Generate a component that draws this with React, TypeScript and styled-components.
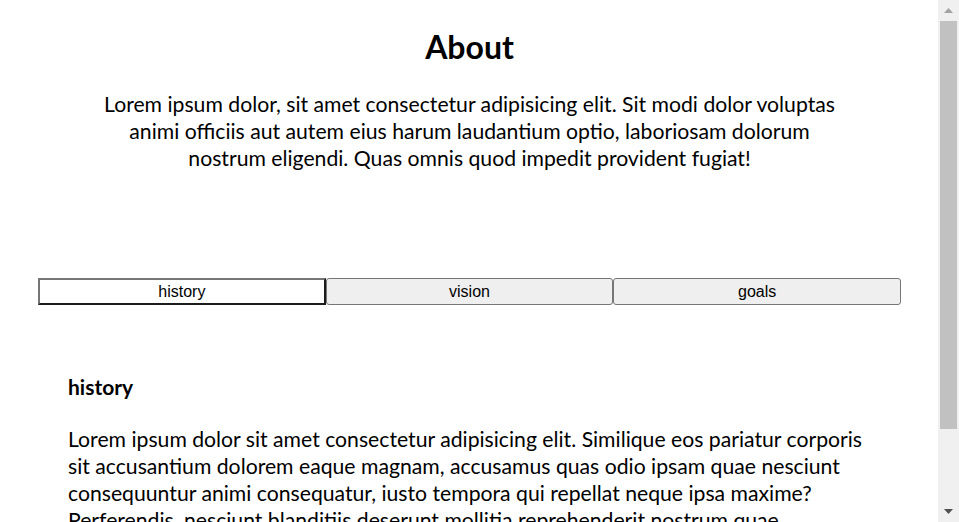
import React, { useState } from "react";
import styled, { createGlobalStyle } from "styled-components";

const GlobalStyle = createGlobalStyle`
  html, body { height: 100%; overflow: hidden; }
  body {
    margin: 0;
    background: #ffffff;
    color: #000000;
    font-family: Lato, "Noto Sans CJK KR", sans-serif;
  }
`;

const Frame = styled.div`
  display: flex;
  height: 100vh;
  overflow: hidden;
`;

const Viewport = styled.div`
  flex: 1;
  min-width: 0;
  overflow-y: auto;
  scrollbar-width: none;
`;

const Rail = styled.div`
  flex: none;
  width: 21px;
  display: flex;
  flex-direction: column;
  background: #f0f0f0;
`;

const RailButton = styled.div`
  flex: none;
  height: 21px;
  display: flex;
  align-items: center;
  justify-content: center;
`;

const RailTrack = styled.div`
  flex: 1;
  padding: 0 2px;
`;

const Thumb = styled.div`
  height: 408px;
  background: #c1c1c1;
`;

const Page = styled.main`
  padding: 0 37px 60px 38px;
`;

const Intro = styled.header`
  display: flex;
  flex-direction: column;
  align-items: center;
  padding-top: 23px;
`;

const Title = styled.h1`
  margin: 0;
  font-size: 32px;
  line-height: 48px;
  font-weight: 700;
`;

const Lead = styled.p`
  margin: 20px 0 0;
  max-width: 745px;
  text-align: center;
  font-size: 21.2px;
  line-height: 27px;
`;

const TabBar = styled.nav`
  display: grid;
  grid-template-columns: repeat(3, 1fr);
  margin-top: 106px;
`;

const Tab = styled.button<{ $active: boolean }>`
  min-width: 0;
  box-sizing: border-box;
  height: 27px;
  padding: 0 6px;
  font-family: "Liberation Sans", Arial, sans-serif;
  font-size: 16px;
  color: #000;
  cursor: pointer;
  background: ${(p) => (p.$active ? "#ffffff" : "#efefef")};
  border-style: solid;
  border-width: ${(p) => (p.$active ? "2px" : "1px")};
  border-color: ${(p) =>
    p.$active ? "#767676 #1c1c1c #1c1c1c #767676" : "#767676"};
  border-radius: ${(p) => (p.$active ? "0" : "3px")};
`;

const Panel = styled.section`
  padding: 68px 30px 0;
`;

const PanelTitle = styled.h3`
  margin: 0;
  font-size: 21px;
  line-height: 27px;
  font-weight: 700;
`;

const PanelText = styled.p`
  margin: 26px 0 0;
  font-size: 21.2px;
  line-height: 27px;
`;

const tabs = ["history", "vision", "goals"] as const;
type TabKey = (typeof tabs)[number];

const content: Record<TabKey, string> = {
  history:
    "Lorem ipsum dolor sit amet consectetur adipisicing elit. Similique eos pariatur corporis sit accusantium dolorem eaque magnam, accusamus quas odio ipsam quae nesciunt consequuntur animi consequatur, iusto tempora qui repellat neque ipsa maxime? Perferendis, nesciunt blanditiis deserunt mollitia reprehenderit nostrum quae.",
  vision:
    "Lorem ipsum dolor sit amet consectetur adipisicing elit. Quibusdam voluptatum, odit eius ratione nemo quae dolorum a aspernatur consequuntur fugiat incidunt cumque, tempora rem doloremque.",
  goals:
    "Lorem ipsum dolor sit amet consectetur adipisicing elit. Eligendi vel sint reiciendis, repellendus, dicta voluptas ullam doloribus quam impedit laborum quos ipsum nobis.",
};

export default function App() {
  const [active, setActive] = useState<TabKey>("history");
  return (
    <>
      <GlobalStyle />
      <Frame>
        <Viewport>
          <Page>
            <Intro>
              <Title>About</Title>
              <Lead>
                Lorem ipsum dolor, sit amet consectetur adipisicing elit. Sit
                modi dolor voluptas animi officiis aut autem eius harum
                laudantium optio, laboriosam dolorum nostrum eligendi. Quas
                omnis quod impedit provident fugiat!
              </Lead>
            </Intro>
            <TabBar>
              {tabs.map((t) => (
                <Tab
                  key={t}
                  $active={t === active}
                  onClick={() => setActive(t)}
                >
                  {t}
                </Tab>
              ))}
            </TabBar>
            <Panel>
              <PanelTitle>{active}</PanelTitle>
              <PanelText>{content[active]}</PanelText>
            </Panel>
          </Page>
        </Viewport>
        <Rail aria-hidden="true">
          <RailButton>
            <svg width="9" height="5" viewBox="0 0 9 5">
              <path d="M0 5L4.5 0L9 5z" fill="#a3a3a3" />
            </svg>
          </RailButton>
          <RailTrack>
            <Thumb />
          </RailTrack>
          <RailButton>
            <svg width="9" height="5" viewBox="0 0 9 5">
              <path d="M0 0L4.5 5L9 0z" fill="#505050" />
            </svg>
          </RailButton>
        </Rail>
      </Frame>
    </>
  );
}
